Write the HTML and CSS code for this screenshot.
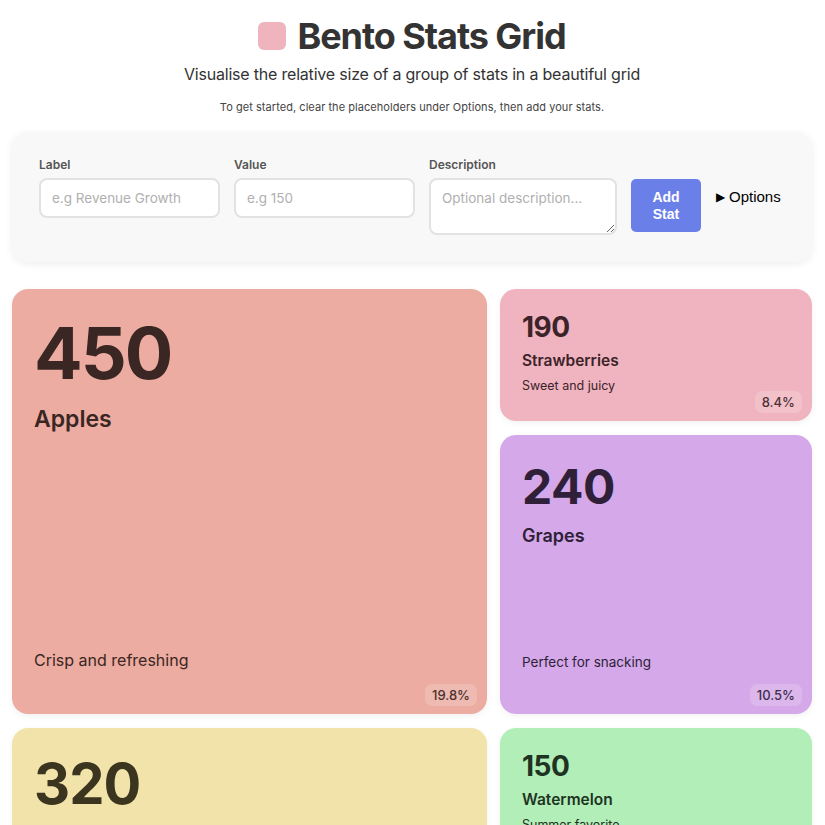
FILE: index.html
```html
<!DOCTYPE html>
<html lang="en">
<head>
<meta charset="utf-8">
<title>Bento Stats Grid</title>
<link rel="stylesheet" href="styles.css">
</head>
<body>
<div class="page">
  <header class="header">
    <h1 class="title"><span class="logo"></span>Bento Stats Grid</h1>
    <p class="subtitle">Visualise the relative size of a group of stats in a beautiful grid</p>
    <p class="hint">To get started, clear the placeholders under Options, then add your stats.</p>
  </header>

  <section class="panel">
    <div class="field">
      <label class="field-label">Label</label>
      <input class="input" type="text" placeholder="e.g Revenue Growth">
    </div>
    <div class="field">
      <label class="field-label">Value</label>
      <input class="input" type="text" placeholder="e.g 150">
    </div>
    <div class="field field-desc">
      <label class="field-label">Description</label>
      <textarea class="textarea" placeholder="Optional description..."></textarea>
    </div>
    <button class="add-btn">Add<br>Stat</button>
    <details class="options"><summary>Options</summary></details>
  </section>

  <main class="grid">
    <div class="card card-xl apples">
      <div class="num">450</div>
      <div class="label">Apples</div>
      <div class="desc">Crisp and refreshing</div>
      <span class="badge">19.8%</span>
    </div>
    <div class="card card-s strawberries">
      <div class="num">190</div>
      <div class="label">Strawberries</div>
      <div class="desc">Sweet and juicy</div>
      <span class="badge">8.4%</span>
    </div>
    <div class="card card-m grapes">
      <div class="num">240</div>
      <div class="label">Grapes</div>
      <div class="desc">Perfect for snacking</div>
      <span class="badge">10.5%</span>
    </div>
    <div class="card card-l bananas">
      <div class="num">320</div>
      <div class="label">Bananas</div>
      <div class="desc">Rich in potassium</div>
      <span class="badge">14.1%</span>
    </div>
    <div class="card card-s watermelon">
      <div class="num">150</div>
      <div class="label">Watermelon</div>
      <div class="desc">Summer favorite</div>
      <span class="badge">6.6%</span>
    </div>
  </main>
</div>
</body>
</html>
```

FILE: styles.css
```css
* { box-sizing: border-box; }
html, body { margin: 0; padding: 0; background: #ffffff; }
body {
  font-family: Inter, "Noto Sans", sans-serif;
  color: #333;
}
.page {
  padding: 12px 13px 40px 12px;
}
.header {
  text-align: center;
  padding-top: 4px;
}
.title {
  margin: 0;
  font-size: 36px;
  font-weight: 700;
  color: #333;
  letter-spacing: -1.05px;
  line-height: 40px;
  display: flex;
  justify-content: center;
  align-items: center;
  gap: 11px;
}
.logo {
  display: inline-block;
  width: 28px;
  height: 28px;
  border-radius: 6px;
  background: #f0b4bf;
}
.subtitle {
  margin: 6px 0 0;
  font-size: 16px;
  letter-spacing: -0.2px;
  line-height: 24px;
  color: #333;
}
.hint {
  margin: 13px 0 0;
  font-size: 11px;
  letter-spacing: 0.05px;
  line-height: 16px;
  color: #444;
}
.panel {
  margin-top: 17px;
  background: #f8f8f8;
  border-radius: 16px;
  box-shadow: 0 2px 8px rgba(0,0,0,0.07);
  padding: 26px 27px 27px 27px;
  display: flex;
  align-items: flex-start;
  gap: 14px;
  height: 130px;
}
.field {
  display: flex;
  flex-direction: column;
  width: 181px;
}
.field-desc { width: 188px; }
.field-label {
  font-size: 12px;
  font-weight: 600;
  color: #555;
  line-height: 14px;
  margin-bottom: 6px;
}
.input, .textarea {
  font-family: Inter, "Noto Sans", sans-serif;
  font-size: 13.5px;
  color: #333;
  background: #fff;
  border: 2px solid #e2e2e2;
  border-radius: 8px;
  padding: 0 11px;
  outline: none;
}
.input { height: 40px; }
.textarea {
  height: 57px;
  padding-top: 10px;
  resize: vertical;
  display: block;
}
.input::placeholder, .textarea::placeholder { color: #b0b0b0; }
.add-btn {
  margin-top: 21px;
  width: 70px;
  height: 53px;
  border: none;
  border-radius: 5px;
  background: #6b7fe9;
  color: #fff;
  font-family: "Liberation Sans", Arial, sans-serif;
  font-weight: 700;
  font-size: 14px;
  line-height: 17px;
  padding: 0;
}
.options {
  margin-top: 30px;
  margin-left: 1px;
  font-family: "Liberation Sans", Arial, sans-serif;
  font-size: 15px;
  color: #000;
}
.options summary { list-style: none; cursor: pointer; }
.options summary::before {
  content: "\25B6";
  font-size: 12px;
  margin-right: 4px;
  position: relative;
  top: -1px;
}
.grid {
  margin-top: 27px;
  display: grid;
  grid-template-columns: 475px 312px;
  grid-template-rows: 132px 279px 300px;
  column-gap: 13px;
  row-gap: 14px;
}
.card {
  position: relative;
  border-radius: 16px;
  padding: 24px 22px 28px 22px;
  display: flex;
  flex-direction: column;
  box-shadow: 0 2px 6px rgba(0,0,0,0.06);
  overflow: hidden;
}
.num { font-weight: 700; line-height: 1; letter-spacing: -0.5px; }
.label { font-weight: 600; }
.badge {
  position: absolute;
  right: 10px;
  bottom: 8px;
  font-size: 13px;
  font-weight: 500;
  line-height: 22px;
  padding: 0 7px;
  border-radius: 7px;
  background: rgba(255,255,255,0.2);
  opacity: 0.9;
}
.apples { grid-column: 1; grid-row: 1 / span 2; background: #ecaca1; color: #3a2622; }
.strawberries { grid-column: 2; grid-row: 1; background: #efb4bf; color: #3c2329; }
.grapes { grid-column: 2; grid-row: 2; background: #d4a8e9; color: #2f1f38; }
.bananas { grid-column: 1; grid-row: 3; background: #f1e3a9; color: #3b3520; }
.watermelon { grid-column: 2; grid-row: 3; background: #b2eeb8; color: #1f3322; }

.card-xl { padding-top: 28px; padding-bottom: 44px; }
.card-xl .num { font-size: 72px; letter-spacing: -2px; }
.card-xl .label { font-size: 23px; margin-top: 16px; }
.card-xl .desc { font-size: 16px; margin-top: auto; }

.card-l { padding-top: 28px; }
.card-l .num { font-size: 56px; letter-spacing: -1px; }
.card-l .label { font-size: 20px; margin-top: 16px; }
.card-l .desc { font-size: 16px; margin-top: auto; }

.card-m { padding-top: 28px; padding-bottom: 44px; }
.card-m .num { font-size: 48px; }
.card-m .label { font-size: 18px; margin-top: 14px; }
.card-m .desc { font-size: 13.5px; margin-top: auto; }

.card-s .num { font-size: 28px; }
.card-s .label { font-size: 15.5px; margin-top: 10px; }
.card-s .desc { font-size: 12.5px; margin-top: 8px; }
```
